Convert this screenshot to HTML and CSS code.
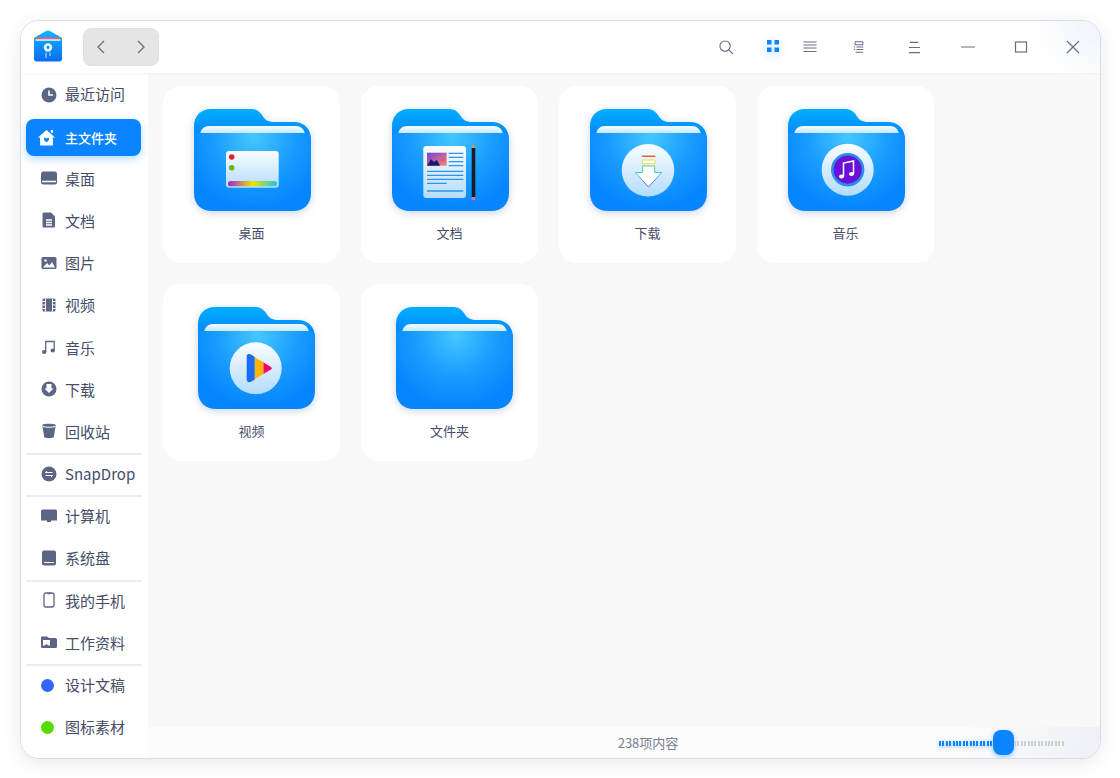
FILE: index.html
```html
<!DOCTYPE html>
<html lang="zh">
<head>
<meta charset="utf-8">
<title>文件管理器</title>
<link rel="stylesheet" href="styles.css">
</head>
<body>
<svg class="sprite" aria-hidden="true">
  <defs>
    <linearGradient id="gBack" x1="0" y1="0" x2="0" y2="1"><stop offset="0" stop-color="#00aeff"/><stop offset="1" stop-color="#0a6cf5"/></linearGradient>
    <radialGradient id="gFront" gradientUnits="userSpaceOnUse" cx="60" cy="28" r="72"><stop offset="0" stop-color="#45c8ff"/><stop offset=".55" stop-color="#1a9dff"/><stop offset="1" stop-color="#0586ff"/></radialGradient>
    <linearGradient id="gPaper" x1="0" y1="0" x2="0" y2="1"><stop offset="0" stop-color="#f4fbff"/><stop offset="1" stop-color="#bfe8fb"/></linearGradient>
    <linearGradient id="gDisc" x1="0" y1="0" x2="0" y2="1"><stop offset="0" stop-color="#fbfdff"/><stop offset="1" stop-color="#b3dcfb"/></linearGradient>
    <linearGradient id="gRain" x1="0" y1="0" x2="1" y2="0"><stop offset="0" stop-color="#a51fd8"/><stop offset=".5" stop-color="#e8e600"/><stop offset="1" stop-color="#22c3e8"/></linearGradient>
    <linearGradient id="gPic" x1="0" y1="0" x2="1" y2="1"><stop offset="0" stop-color="#7a3fe0"/><stop offset="1" stop-color="#f08a70"/></linearGradient>
    <linearGradient id="gArrow" x1="0" y1="0" x2="0" y2="1"><stop offset="0" stop-color="#5fd860"/><stop offset=".4" stop-color="#3fc8d8"/><stop offset="1" stop-color="#7a4fe8"/></linearGradient>
    <linearGradient id="gLogo" x1="0" y1="0" x2="0" y2="1"><stop offset="0" stop-color="#14b4ff"/><stop offset="1" stop-color="#0a6cf0"/></linearGradient>
    <symbol id="folder" viewBox="0 0 117 102">
      <path d="M0 46V17C0 7 7 0 17 0H57C62 0 65 2 68 6C71 11 74 13 80 13H100C110 13 117 20 117 30V46Z" fill="url(#gBack)"/>
      <path d="M6 25C7 20 10 17 15 17H102C107 17 110 20 111 25Z" fill="url(#gPaper)"/>
      <path d="M0 24H114.500C116 26 117 28 117 30V84C117 95 110 102 99 102H18C7 102 0 95 0 84Z" fill="url(#gFront)"/>
    </symbol>
  </defs>
</svg>
<div class="window">
  <header class="titlebar">
    <svg class="logo" viewBox="0 0 30 32">
      <path d="M1 9C1 8 1.500 7.500 2.500 7L13 1C14.300 .3 15.700 .3 17 1L27.500 7C28.500 7.500 29 8 29 9V29C29 30.500 28 31.500 26.500 31.500H3.500C2 31.500 1 30.500 1 29Z" fill="url(#gLogo)"/>
      <rect x="2.500" y="7.500" width="25" height="1.800" fill="#f0607a"/>
      <rect x="2.500" y="9.300" width="25" height="1.500" fill="#e4f4ff"/>
      <circle cx="15" cy="17.500" r="4.200" fill="#e6f6ff"/>
      <circle cx="15" cy="17.500" r="1.400" fill="#0a84f5"/>
      <path d="M13 22.500V28M17 22.500V26" stroke="#cfeaff" stroke-width="1"/>
    </svg>
    <div class="nav">
      <svg class="nav-arrow" viewBox="0 0 10 14"><path d="M8 1L2 7L8 13" /></svg>
      <svg class="nav-arrow" viewBox="0 0 10 14"><path d="M2 1L8 7L2 13" /></svg>
    </div>
    <div class="tools">
      <svg class="tool t-search" viewBox="0 0 16 16"><circle cx="6.500" cy="6.500" r="5.500"/><path d="M10.500 10.500L15 15"/></svg>
      <svg class="tool t-grid" viewBox="0 0 12 12"><rect width="4.500" height="4.500"/><rect x="7.500" width="4.500" height="4.500"/><rect y="7.500" width="4.500" height="4.500"/><rect x="7.500" y="7.500" width="4.500" height="4.500"/></svg>
      <svg class="tool t-list" viewBox="0 0 14 12"><path d="M0.500 1H13.500M0.500 4H13.500M0.500 7H13.500M0.500 10.500H13.500"/></svg>
      <svg class="tool t-tree" viewBox="0 0 14 14"><rect x="2.500" y="1" width="9" height="3.500" rx=".5"/><path d="M1 7H2.500M4 7H12M1 10H2.500M4 10H12M3 13H12"/></svg>
      <svg class="tool t-menu" viewBox="0 0 14 14"><path d="M2 1.500H11M1 7H13M1 12.500H13"/></svg>
      <svg class="tool t-min" viewBox="0 0 14 14"><path d="M0 7H14"/></svg>
      <svg class="tool t-max" viewBox="0 0 14 14"><rect x="1.500" y="2" width="11" height="10"/></svg>
      <svg class="tool t-close" viewBox="0 0 14 14"><path d="M1 1L13 13M13 1L1 13"/></svg>
    </div>
  </header>
  <div class="body">
    <nav class="sidebar">
      <a class="item first"><svg class="ico" viewBox="0 0 16 16"><circle cx="8" cy="8" r="7.500"/><path class="cut" d="M8 3.500V8H12"/></svg><span>最近访问</span></a>
      <a class="item active"><svg class="ico" viewBox="0 0 16 16"><path class="w" d="M8 1L16 8H14V15.500H2V8H0ZM12 1H14V4L12 3Z"/><path class="b" d="M8 12.500C6 11 5.500 10 5.500 9.200C5.500 8 7.300 7.700 8 9C8.700 7.700 10.500 8 10.500 9.200C10.500 10 10 11 8 12.500Z"/></svg><span>主文件夹</span></a>
      <a class="item"><svg class="ico" viewBox="0 0 16 16"><path d="M2 1.500H14C15 1.500 16 2.500 16 3.500V12.500C16 13.500 15 14.500 14 14.500H2C1 14.500 0 13.500 0 12.500V3.500C0 2.500 1 1.500 2 1.500Z"/><path class="cut" d="M1 11.500H15"/></svg><span>桌面</span></a>
      <a class="item"><svg class="ico" viewBox="0 0 16 16"><path d="M3 0.500H10L14 4.500V14C14 15 13 15.500 12.500 15.500H3C2 15.500 1.500 15 1.500 14V2C1.500 1 2 0.500 3 0.500Z"/><path class="cut" d="M5 8H11M5 10.500H11M5 13H11"/></svg><span>文档</span></a>
      <a class="item"><svg class="ico" viewBox="0 0 16 16"><rect x="0.500" y="2" width="15" height="12" rx="1.500"/><circle class="c" cx="4.500" cy="5.500" r="1.300"/><path class="c" d="M2 12.500L6 8L8.500 10.500L11 7L14 12.500Z"/></svg><span>图片</span></a>
      <a class="item"><svg class="ico" viewBox="0 0 16 16"><rect x="1.500" y="1.500" width="13" height="13" rx="1.500"/><path class="cut thin" d="M4.500 1.500V14.500M11.500 1.500V14.500M1.500 4.500H4.500M1.500 8H4.500M1.500 11.500H4.500M11.500 4.500H14.500M11.500 8H14.500M11.500 11.500H14.500"/></svg><span>视频</span></a>
      <a class="item"><svg class="ico" viewBox="0 0 16 16"><path class="stroke" d="M4.700 13V2.500H13.200V11.500"/><ellipse cx="3.200" cy="13" rx="2.200" ry="2"/><ellipse cx="11.700" cy="11.500" rx="2.200" ry="2"/></svg><span>音乐</span></a>
      <a class="item"><svg class="ico" viewBox="0 0 16 16"><circle cx="8" cy="8" r="7.500"/><path class="c" d="M5.500 3H10.500V7.500H12.500L8 12L3.500 7.500H5.500Z"/></svg><span>下载</span></a>
      <a class="item"><svg class="ico" viewBox="0 0 16 16"><path d="M1.500 1.500C4 0.500 12 0.500 14.500 1.500V3.500L12.800 14C12.500 15.500 3.500 15.500 3.200 14L1.500 3.500Z"/><path class="cut thin" d="M2 3.500C5 4.500 11 4.500 14 3.500"/></svg><span>回收站</span></a>
      <hr class="sep">
      <a class="item"><svg class="ico" viewBox="0 0 16 16"><circle cx="8" cy="8" r="7.500"/><path class="cut thin" d="M4.500 6.500H11.500M6 5L4.500 6.500M4.500 9.500H11.500M10 11L11.500 9.500"/></svg><span>SnapDrop</span></a>
      <hr class="sep">
      <a class="item"><svg class="ico" viewBox="0 0 16 16"><rect x="0" y="1.500" width="16" height="10" rx="1.500"/><path d="M0 11H16V12.500H10V14H6V12.500H0Z"/></svg><span>计算机</span></a>
      <a class="item"><svg class="ico" viewBox="0 0 16 16"><rect x="1" y="0.500" width="14" height="15" rx="2"/><path class="cut thin" d="M3 12.500H13"/></svg><span>系统盘</span></a>
      <hr class="sep">
      <a class="item"><svg class="ico" viewBox="0 0 16 16"><rect class="stroke" x="3" y="1" width="10" height="14" rx="2"/><path class="stroke" d="M6.500 1.500H9.500"/></svg><span>我的手机</span></a>
      <a class="item"><svg class="ico" viewBox="0 0 16 16"><path d="M1 2.500H6L8 4H14C15 4 16 4.500 16 6V12.500C16 13.500 15 14 14 14H2C1 14 0 13.500 0 12.500V3.500C0 3 0.500 2.500 1 2.500Z"/><path class="c" d="M2 6H9V12L5.500 10.200L2 12Z"/></svg><span>工作资料</span></a>
      <hr class="sep">
      <a class="item"><span class="dot blue"></span><span>设计文稿</span></a>
      <a class="item"><span class="dot green"></span><span>图标素材</span></a>
    </nav>
    <main class="main">
      <div class="files">
        <figure class="card">
          <svg class="folder" viewBox="0 0 117 102">
            <use href="#folder"/>
            <rect x="32" y="42" width="52.700" height="36.700" rx="3" fill="url(#gDisc)"/>
            <circle cx="37.700" cy="48" r="2.800" fill="#e0203a"/>
            <circle cx="37.700" cy="58.700" r="2.800" fill="#6cb820"/>
            <rect x="34" y="72" width="49" height="5.300" rx="2.600" fill="url(#gRain)"/>
          </svg>
          <figcaption>桌面</figcaption>
        </figure>
        <figure class="card">
          <svg class="folder" viewBox="0 0 117 102">
            <use href="#folder"/>
            <rect x="31.300" y="37" width="42.700" height="52" rx="3" fill="url(#gDisc)"/>
            <rect x="35" y="43.700" width="19.700" height="13" fill="url(#gPic)"/>
            <path d="M35 56.700L39 50L42 53L45 51L48 56.700Z" fill="#1a1a70"/>
            <circle cx="51" cy="51" r="1.800" fill="#f05060"/>
            <path d="M56.700 44.300H71.300M56.700 48.300H71.300M56.700 52.700H71.300M56.700 56.700H71.300M35 62.300H71.300M35 66.300H71.300M35 70.300H71.300M35 74.300H54.700M35 82H71.300" stroke="#2c95ea" stroke-width="1.300" fill="none"/>
            <rect x="79.700" y="39" width="3.600" height="49" fill="#1c1c22"/>
            <path d="M79.700 39L81.500 34.300L83.300 39Z" fill="#c89a60"/>
            <rect x="79.700" y="88" width="3.600" height="3" rx="1" fill="#f06a8a"/>
          </svg>
          <figcaption>文档</figcaption>
        </figure>
        <figure class="card">
          <svg class="folder" viewBox="0 0 117 102">
            <use href="#folder"/>
            <circle cx="58" cy="61.300" r="26.300" fill="url(#gDisc)"/>
            <rect x="52" y="46.500" width="13.300" height="1.500" fill="#f5602a"/>
            <rect x="52.500" y="51" width="12.500" height="3.700" rx=".8" fill="#fff" stroke="#d8e020" stroke-width=".8"/>
            <path d="M52.700 57H64.700V63.500H71.700L58.500 78L45.300 63.500H52.700Z" fill="#fff" stroke="url(#gArrow)" stroke-width="1" stroke-linejoin="round"/>
          </svg>
          <figcaption>下载</figcaption>
        </figure>
        <figure class="card">
          <svg class="folder" viewBox="0 0 117 102">
            <use href="#folder"/>
            <circle cx="59.700" cy="60.700" r="26" fill="url(#gDisc)"/>
            <circle cx="59.700" cy="60.700" r="16.700" fill="#2a8de6"/>
            <circle cx="59.700" cy="60.700" r="14" fill="#6a10d8"/>
            <path d="M55.500 67.500V54L65.500 52V65" stroke="#fff" stroke-width="1.500" fill="none"/>
            <ellipse cx="53.500" cy="67.500" rx="2.500" ry="2.100" fill="#fff"/>
            <ellipse cx="63.500" cy="65" rx="2.500" ry="2.100" fill="#fff"/>
          </svg>
          <figcaption>音乐</figcaption>
        </figure>
        <figure class="card shifted">
          <svg class="folder" viewBox="0 0 117 102">
            <use href="#folder"/>
            <circle cx="57.700" cy="61.300" r="26" fill="url(#gDisc)"/>
            <path d="M65.300 55.300L73 60C74 60.800 74 61.800 73 62.500L65.300 67Z" fill="#f5056a"/>
            <path d="M56.700 50.300L65.300 55.300V67L56.700 72.300Z" fill="#ffb400"/>
            <path d="M48.700 49.500C48.700 46.500 51.500 46.500 53.500 47.800L56.700 50V72.500L53.500 74.500C51.500 75.800 48.700 75.500 48.700 72.500Z" fill="#1a6cf0"/>
          </svg>
          <figcaption>视频</figcaption>
        </figure>
        <figure class="card shifted">
          <svg class="folder" viewBox="0 0 117 102">
            <use href="#folder"/>
          </svg>
          <figcaption>文件夹</figcaption>
        </figure>
      </div>
      <footer class="status">
        <span class="count">238项内容</span>
        <div class="slider">
          <div class="track-on"></div>
          <div class="thumb"></div>
          <div class="track-off"></div>
        </div>
      </footer>
    </main>
  </div>
</div>
</body>
</html>
```
FILE: styles.css
```css
* { box-sizing: border-box; }
html, body { margin: 0; height: 100%; background: #fff; overflow: hidden; }
body { padding: 20px 0 0 20px; font-family: "Noto Sans CJK SC", "Noto Sans", sans-serif; }
.sprite { display: block; width: 0; height: 0; }

.window {
  width: 1081px;
  height: 739px;
  border: 1px solid #dcdde2;
  border-radius: 19px;
  background: #fff;
  overflow: hidden;
  display: flex;
  flex-direction: column;
  box-shadow: 0 4px 18px rgba(40, 50, 80, .10);
}

.titlebar {
  height: 52px;
  flex: none;
  display: flex;
  align-items: center;
  padding: 0 0 0 12px;
  background: radial-gradient(circle at 100% 0, #eef3fb 0, #fff 70px);
  box-shadow: 0 1px 2px rgba(0, 0, 0, .04);
  position: relative;
  z-index: 1;
}
.logo { width: 30px; height: 32px; display: block; margin-top: -2px; }
.nav {
  margin-left: 20px;
  width: 76px;
  height: 38px;
  background: #e5e5e5;
  border: 1px solid #e0e0e0;
  border-radius: 8px;
  display: flex;
  align-items: center;
  justify-content: space-between;
  padding: 0 12px;
}
.nav-arrow { width: 10px; height: 14px; fill: none; stroke: #6c7288; stroke-width: 1.400; }

.tools { margin-left: auto; display: flex; align-items: center; }
.tool { display: block; fill: none; stroke: #666d85; stroke-width: 1.200; width: 14px; height: 14px; }
.t-search { width: 15px; height: 15px; margin-right: 33px; }
.t-grid { width: 12px; height: 12px; fill: #0a84ff; stroke: none; margin-right: 24px; filter: drop-shadow(0 3px 5px rgba(10, 132, 255, .35)); margin-top: -2px; }
.t-list { width: 14px; height: 12px; margin-right: 36px; }
.t-tree { width: 12px; height: 12px; margin-right: 43px; }
.t-menu { width: 13px; height: 13px; margin-right: 40px; }
.t-min { margin-right: 39px; }
.t-max { margin-right: 38px; }
.t-close { margin-right: 20px; }

.body { flex: 1; min-height: 0; display: flex; }

.sidebar {
  width: 127px;
  flex: none;
  background: #fff;
  padding: 0 7px 0 5px;
  display: flex;
  flex-direction: column;
}
.item {
  height: 42.200px;
  flex: none;
  display: flex;
  align-items: center;
  padding-left: 14.500px;
  gap: 8.500px;
  font-size: 15px;
  color: #454d68;
  font-weight: 400;
  border-radius: 8px;
  white-space: nowrap;
}
.first span { margin-top: -2px; }
.first .ico { margin-top: 2px; }
.ico { width: 16px; height: 16px; fill: #5c6583; flex: none; display: block; }
.ico .cut { fill: none; stroke: #fff; stroke-width: 1.600; }
.ico .cut.thin { stroke-width: 1; }
.ico .c { fill: #fff; }
.ico .stroke { fill: none; stroke: #5c6583; stroke-width: 1.300; }
.active {
  height: 37px;
  margin: 4px 0 1px;
  padding-left: 12px;
  gap: 10px;
  background: #0a84ff;
  color: #fff;
  font-size: 13px;
  font-weight: 500;
  box-shadow: 0 3px 8px rgba(10, 132, 255, .3);
}
.active .ico { width: 17px; height: 17px; }
.active .w { fill: #fff; }
.active .b { fill: #0a84ff; }
.sep { height: 2px; margin: .5px -1px -2.500px 0; border: 0; background: #ececee; flex: none; }
.dot { width: 13px; height: 13px; border-radius: 50%; margin: 1px 3px 0 0; flex: none; }
.blue { background: #3267ff; }
.green { background: #57dc00; }

.main {
  flex: 1;
  min-width: 0;
  background: #f8f8f8;
  display: flex;
  flex-direction: column;
}
.files {
  flex: 1;
  padding: 13px 0 0 15px;
  display: grid;
  grid-template-columns: repeat(4, 177px);
  grid-auto-rows: 177px;
  gap: 21px;
  align-content: start;
}
.card {
  margin: 0;
  background: #fff;
  border-radius: 18px;
  padding: 23px 0 0 31px;
  position: relative;
}
.shifted { padding-left: 35px; }
.folder {
  width: 117px;
  height: 102px;
  display: block;
  overflow: visible;
  filter: drop-shadow(0 2px 4px rgba(20, 60, 120, .22));
}
figcaption {
  position: absolute;
  left: 0;
  right: 0;
  top: 136px;
  text-align: center;
  font-size: 13px;
  line-height: 22px;
  color: #454d68;
  font-weight: 400;
}

.status {
  height: 31px;
  flex: none;
  position: relative;
  display: flex;
  align-items: center;
  justify-content: center;
  background: linear-gradient(100deg, #fcfcfc 85%, #eef0f6 100%);
}
.count { font-size: 13px; color: #7a7f90; margin-left: 48px; }
.slider {
  position: absolute;
  right: 35px;
  top: 0;
  height: 31px;
  width: 126px;
  display: flex;
  align-items: center;
}
.track-on, .track-off { height: 5px; margin-top: 2px; }
.track-on {
  width: 54px;
  background: repeating-linear-gradient(90deg, #0a84ff 0 2px, transparent 2px 3.400px);
  filter: drop-shadow(0 1px 2px rgba(10, 132, 255, .5));
}
.thumb {
  width: 21px;
  height: 25px;
  border-radius: 8px;
  background: #0a84ff;
  flex: none;
  box-shadow: 0 2px 5px rgba(10, 132, 255, .4);
}
.track-off {
  flex: 1;
  background: repeating-linear-gradient(90deg, #cfcfcf 0 2px, transparent 2px 3.400px);
}
```
